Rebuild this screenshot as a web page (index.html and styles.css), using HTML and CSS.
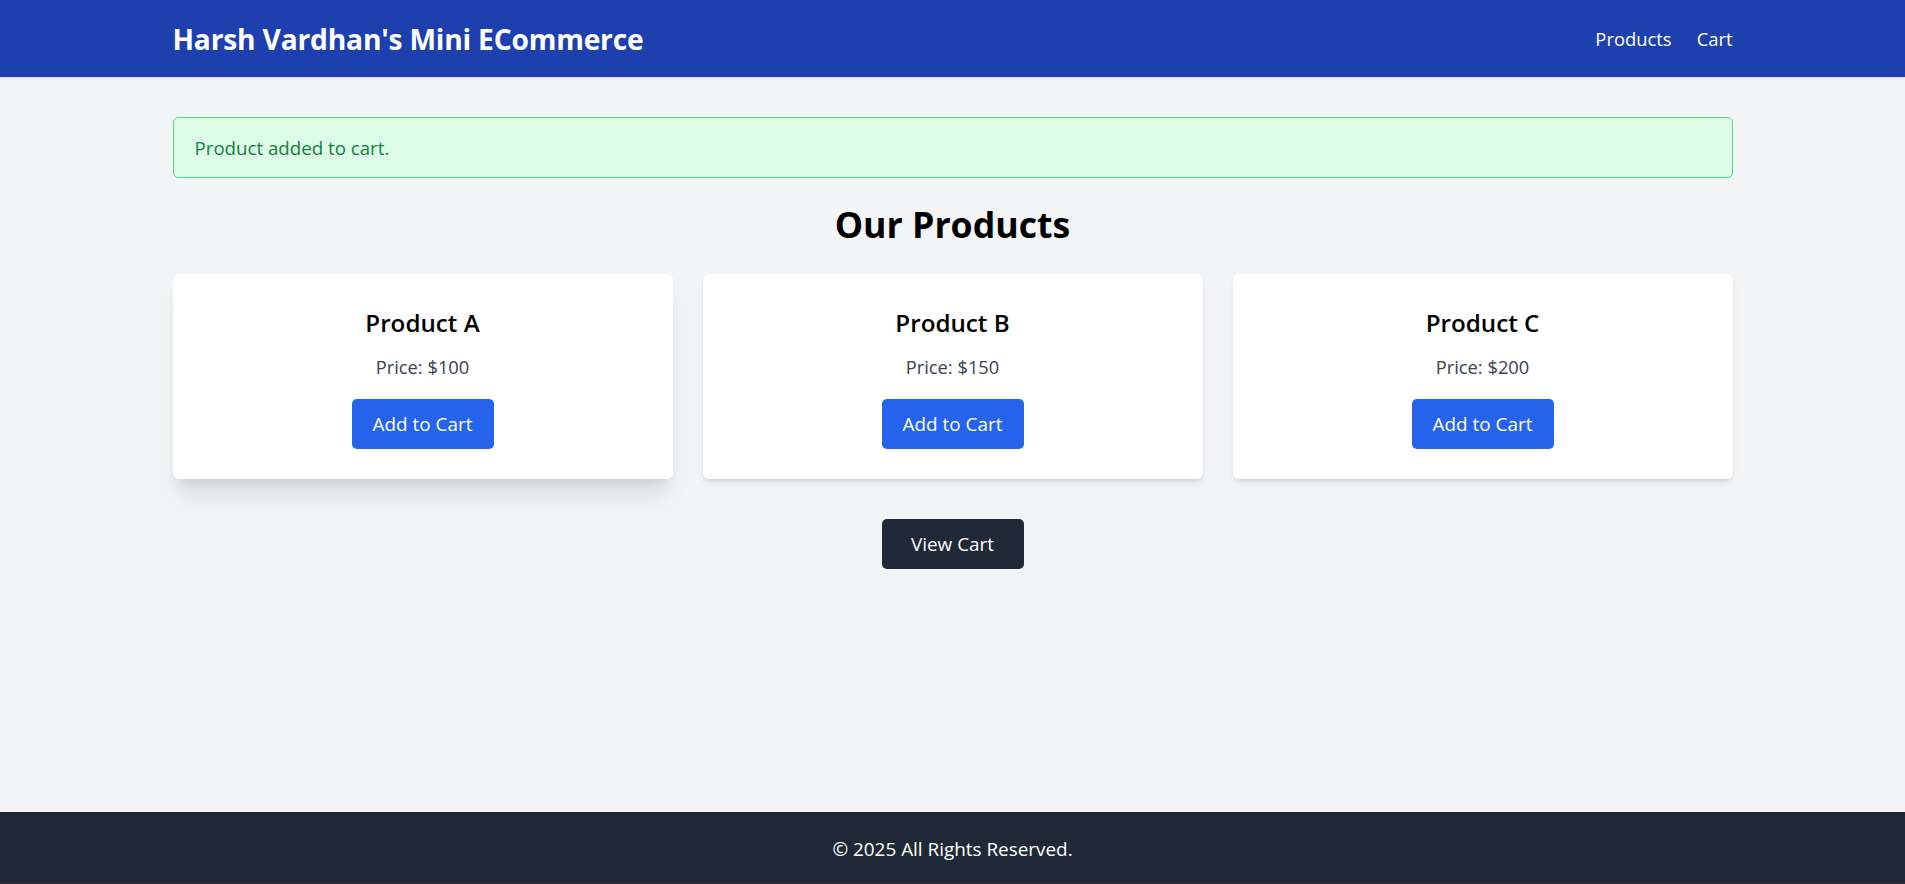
FILE: index.html
```html
<!DOCTYPE html>
<html lang="en">
<head>
<meta charset="utf-8">
<title>Harsh Vardhan's Mini ECommerce</title>
<link rel="stylesheet" href="styles.css">
</head>
<body>
<div class="page">
  <header class="topbar">
    <div class="container topbar-inner">
      <h1 class="brand">Harsh Vardhan's Mini ECommerce</h1>
      <nav class="nav">
        <a href="#" class="nav-link">Products</a>
        <a href="#" class="nav-link">Cart</a>
      </nav>
    </div>
  </header>
  <main class="main">
    <div class="container">
      <div class="alert">Product added to cart.</div>
      <h2 class="heading">Our Products</h2>
      <div class="grid">
        <div class="card card-hover">
          <h3 class="card-title">Product A</h3>
          <p class="price">Price: $100</p>
          <button class="btn btn-blue">Add to Cart</button>
        </div>
        <div class="card">
          <h3 class="card-title">Product B</h3>
          <p class="price">Price: $150</p>
          <button class="btn btn-blue">Add to Cart</button>
        </div>
        <div class="card">
          <h3 class="card-title">Product C</h3>
          <p class="price">Price: $200</p>
          <button class="btn btn-blue">Add to Cart</button>
        </div>
      </div>
      <div class="center">
        <a href="#" class="btn btn-dark">View Cart</a>
      </div>
    </div>
  </main>
  <footer class="footer">© 2025 All Rights Reserved.</footer>
</div>
</body>
</html>
```

FILE: styles.css
```css
* { box-sizing: border-box; }
html, body { margin: 0; padding: 0; }
body {
  font-family: "Open Sans", "Noto Sans", sans-serif;
  font-size: 18px;
  background: #f3f4f6;
  color: #111;
}
.page {
  min-height: 100vh;
  display: flex;
  flex-direction: column;
}
.container {
  max-width: 1560px;
  margin: 0 auto;
  width: 100%;
}
.topbar {
  background: #1e40af;
  color: #fff;
  height: 77px;
  display: flex;
  align-items: center;
  box-shadow: 0 1px 3px rgba(0,0,0,0.1);
}
.topbar-inner {
  display: flex;
  align-items: center;
  justify-content: space-between;
}
.brand {
  margin: 0;
  font-size: 28.2px;
  font-weight: 700;
  line-height: 36px;
  letter-spacing: -0.2px;
}
.nav {
  display: flex;
  gap: 25px;
}
.nav-link {
  color: #fff;
  text-decoration: none;
  font-size: 18.4px;
}
.main {
  flex: 1;
  padding-top: 40px;
}
.alert {
  background: #dcfce7;
  border: 1px solid #4ade80;
  color: #15803d;
  border-radius: 5px;
  padding: 0 21px;
  height: 61px;
  display: flex;
  align-items: center;
  font-size: 18.7px;
}
.heading {
  margin: 24px 0 0;
  text-align: center;
  font-size: 35.7px;
  line-height: 44px;
  font-weight: 700;
  color: #000;
}
.grid {
  display: grid;
  grid-template-columns: repeat(3, 1fr);
  gap: 30px;
  margin-top: 28px;
}
.card {
  background: #fff;
  border-radius: 6px;
  box-shadow: 0 4px 6px -1px rgba(0,0,0,0.1), 0 2px 4px -2px rgba(0,0,0,0.1);
  padding: 31px 20px 28px;
  display: flex;
  flex-direction: column;
  align-items: center;
  height: 205px;
}
.card-hover {
  box-shadow: 0 20px 25px -5px rgba(0,0,0,0.1), 0 8px 10px -6px rgba(0,0,0,0.1);
}
.card-title {
  margin: 0;
  font-size: 24.2px;
  line-height: 36px;
  font-weight: 600;
  color: #000;
}
.price {
  margin: 11px 0 0;
  font-size: 18.3px;
  line-height: 29px;
  color: #374151;
}
.btn {
  display: inline-flex;
  align-items: center;
  justify-content: center;
  width: 142px;
  height: 50px;
  border: none;
  border-radius: 5px;
  color: #fff;
  font-family: inherit;
  font-size: 18.9px;
  text-decoration: none;
  cursor: pointer;
}
.btn-blue {
  background: #2563eb;
  margin-top: 18px;
}
.btn-dark {
  background: #1f2937;
}
.center {
  display: flex;
  justify-content: center;
  margin-top: 40px;
}
.footer {
  background: #1f2937;
  color: #fff;
  height: 72px;
  display: flex;
  align-items: center;
  justify-content: center;
  font-size: 18.9px;
  padding-top: 3px;
  border-bottom: 2px solid #2f3033;
}
```
